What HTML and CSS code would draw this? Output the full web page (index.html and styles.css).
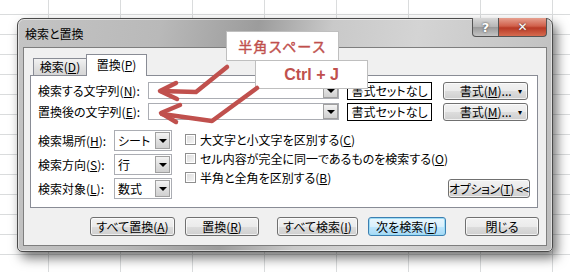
FILE: index.html
```html
<!DOCTYPE html>
<html lang="ja">
<head>
  <meta charset="UTF-8" />
  <title>検索と置換</title>
  <link rel="stylesheet" href="styles.css">
</head>
<body>
  <div class="dialog">
    <div class="titlebar">
      <span class="title">検索と置換</span>
      <div class="caption-btns">
        <span class="cbtn help">?</span>
        <span class="cbtn close">✕</span>
      </div>
    </div>

    <div class="client">
      <div class="tabs">
        <span class="tab">検索(<u>D</u>)</span>
        <span class="tab active">置換(<u>P</u>)</span>
      </div>

      <div class="panel">
        <div class="row">
          <span class="lbl">検索する文字列(<u>N</u>):</span>
          <div class="combo wide"><span class="drop"></span></div>
          <div class="fmt-preview">書式セットなし</div>
          <span class="btn fmt">書式(<u>M</u>)... <span class="caret">▾</span></span>
        </div>
        <div class="row second">
          <span class="lbl">置換後の文字列(<u>E</u>):</span>
          <div class="combo wide"><span class="drop"></span></div>
          <div class="fmt-preview">書式セットなし</div>
          <span class="btn fmt">書式(<u>M</u>)... <span class="caret">▾</span></span>
        </div>

        <div class="options">
          <div class="selects">
            <div class="srow">
              <span class="lbl2">検索場所(<u>H</u>):</span>
              <div class="combo small"><span class="val">シート</span><span class="drop"></span></div>
            </div>
            <div class="srow">
              <span class="lbl2">検索方向(<u>S</u>):</span>
              <div class="combo small"><span class="val">行</span><span class="drop"></span></div>
            </div>
            <div class="srow">
              <span class="lbl2">検索対象(<u>L</u>):</span>
              <div class="combo small"><span class="val">数式</span><span class="drop"></span></div>
            </div>
          </div>

          <div class="checks">
            <div class="check"><span class="box"></span>大文字と小文字を区別する(<u>C</u>)</div>
            <div class="check"><span class="box"></span>セル内容が完全に同一であるものを検索する(<u>O</u>)</div>
            <div class="check"><span class="box"></span>半角と全角を区別する(<u>B</u>)</div>
          </div>

          <span class="btn opt">オプション(<u>T</u>) &lt;&lt;</span>
        </div>
      </div>

      <div class="footer">
        <span class="btn b-all">すべて置換(<u>A</u>)</span>
        <span class="btn b-rep">置換(<u>R</u>)</span>
        <span class="btn b-findall">すべて検索(<u>I</u>)</span>
        <span class="btn b-next default">次を検索(<u>F</u>)</span>
        <span class="btn b-close">閉じる</span>
      </div>
    </div>
  </div>

  <div class="callout c1">半角スペース</div>
  <div class="callout c2">Ctrl + J</div>

  <svg class="arrows" width="570" height="272" viewBox="0 0 570 272">
    <g fill="none" stroke="#c0504d" stroke-width="4.5" stroke-linecap="round" stroke-linejoin="round">
      <polyline points="227,67 196,92 161,91" />
      <polyline points="176,83 160,91 177,99" />
      <polyline points="257,88 212,121 162,114" />
      <polyline points="180,105 161,113 176,122" />
    </g>
  </svg>
</body>
</html>
```

FILE: styles.css
```css
body {
  margin: 0;
  width: 570px;
  height: 272px;
  overflow: hidden;
  position: relative;
  font-family: "Noto Sans CJK JP", sans-serif;
  font-size: 12px;
  font-feature-settings: "palt";
  line-height: 1;
  white-space: nowrap;
  color: #000;
  background-color: #fff;
  background-image:
    linear-gradient(to right, #dadcdd 1px, transparent 1px),
    linear-gradient(to bottom, #dadcdd 1px, transparent 1px);
  background-size: 72px 20px;
  background-position: 48px 14px;
  padding-top: 18px;
  box-sizing: border-box;
}

u {
  text-decoration: underline;
  text-underline-offset: 1px;
}

.dialog {
  margin-left: 17px;
  width: 536px;
  height: 234px;
  box-sizing: border-box;
  border: 1px solid #4a4a4a;
  border-radius: 7px 7px 5px 5px;
  padding: 0 5px 5px 5px;
  background: linear-gradient(100deg, #c4c4c4 0%, #b9b9b9 25%, #9c9c9c 42%, #c9c9c9 55%, #d4d4d4 70%, #bdbdbd 100%);
  box-shadow: 4px 6px 12px rgba(0, 0, 0, 0.55), inset 0 0 0 1px rgba(255, 255, 255, 0.5);
}

.titlebar {
  height: 28px;
  display: flex;
  justify-content: space-between;
  align-items: flex-start;
}

.title {
  margin: 8px 0 0 2px;
  line-height: 14px;
  font-size: 12px;
}

.caption-btns {
  display: flex;
  margin-top: -1px;
}

.cbtn {
  height: 19px;
  display: flex;
  align-items: center;
  justify-content: center;
  box-sizing: border-box;
  border: 1px solid #555;
  border-top: none;
  font-family: "DejaVu Sans", sans-serif;
  font-weight: bold;
  color: #fff;
  text-shadow: 0 0 2px #333;
}

.help {
  width: 27px;
  border-radius: 0 0 0 4px;
  background: linear-gradient(#d8d8d8, #b5b5b5 50%, #9a9a9a 52%, #c4c4c4);
  font-size: 13px;
}

.close {
  width: 48px;
  border-left: none;
  border-radius: 0 0 4px 0;
  background: linear-gradient(#e6a08f, #d0604b 45%, #b83a26 55%, #d66b4f);
  font-size: 12px;
}

.client {
  height: 199px;
  box-sizing: border-box;
  border: 1px solid #7e7e7e;
  background: #f0f0f0;
  padding: 6px 0 0 6px;
}

.tabs {
  display: flex;
  align-items: flex-end;
  height: 21px;
  padding-left: 3px;
}

.tab {
  height: 17px;
  width: 53px;
  box-sizing: border-box;
  border: 1px solid #898c95;
  border-bottom: none;
  border-right: none;
  background: linear-gradient(#f2f2f2, #e2e2e2 50%, #d6d6d6);
  display: flex;
  align-items: center;
  justify-content: center;
}

.tab.active {
  height: 22px;
  width: 61px;
  border-right: 1px solid #898c95;
  background: #fff;
  padding-bottom: 2px;
  margin-bottom: -1px;
  position: relative;
  z-index: 1;
}

.panel {
  width: 508px;
  height: 133px;
  box-sizing: border-box;
  border: 1px solid #898c95;
  background: #fff;
  padding: 6px 9px 0 7px;
}

.row {
  display: flex;
  align-items: center;
  height: 17px;
}

.row.second {
  margin-top: 4px;
}

.lbl {
  width: 110px;
}

.combo {
  box-sizing: border-box;
  border: 1px solid #abadb3;
  background: #fff;
  display: flex;
  align-items: center;
  justify-content: space-between;
}

.combo.wide {
  width: 192px;
  height: 17px;
  justify-content: flex-end;
}

.drop {
  width: 15px;
  height: 15px;
  box-sizing: border-box;
  border: 1px solid #a0a0a0;
  background: linear-gradient(#f4f4f4, #e0e0e0 50%, #d0d0d0);
  position: relative;
}

.drop::after {
  content: "";
  position: absolute;
  left: 3px;
  top: 5px;
  border-left: 4px solid transparent;
  border-right: 4px solid transparent;
  border-top: 4px solid #000;
}

.fmt-preview {
  margin-left: 8px;
  width: 86px;
  height: 18px;
  box-sizing: border-box;
  border: 1px solid #000;
  background: #fff;
  display: flex;
  align-items: center;
  justify-content: center;
}

.btn {
  box-sizing: border-box;
  border: 1px solid #707070;
  border-radius: 3px;
  background: linear-gradient(#f2f2f2, #ebebeb 50%, #dddddd 51%, #cfcfcf);
  box-shadow: inset 0 0 0 1px rgba(255, 255, 255, 0.7);
  display: flex;
  align-items: center;
  justify-content: center;
}

.btn.fmt {
  margin-left: 11px;
  width: 85px;
  height: 18px;
  position: relative;
}

.caret {
  position: absolute;
  right: 5px;
  top: 4px;
  font-size: 8px;
}

.options {
  display: flex;
  margin-top: 10px;
  height: 69px;
}

.srow {
  display: flex;
  align-items: center;
  height: 21px;
  margin-bottom: 3px;
}

.lbl2 {
  width: 76px;
}

.combo.small {
  width: 58px;
  height: 21px;
  padding: 0 1px 0 3px;
}

.combo.small .drop {
  height: 17px;
  width: 15px;
}

.combo.small .drop::after {
  top: 6px;
}

.checks {
  margin-left: 13px;
}

.check {
  display: flex;
  align-items: center;
  height: 19px;
}

.box {
  width: 11px;
  height: 11px;
  box-sizing: border-box;
  border: 1px solid #8f8f8f;
  background: linear-gradient(135deg, #dcdcdc, #f6f6f6);
  box-shadow: inset 0 0 0 1px #fff;
  margin-right: 4px;
}

.btn.opt {
  margin-left: auto;
  align-self: flex-end;
  margin-bottom: 1px;
  width: 88px;
  height: 19px;
  letter-spacing: -0.4px;
}

.footer {
  display: flex;
  margin-top: 9px;
  padding-left: 60px;
}

.footer .btn {
  height: 19px;
}

.b-all { width: 85px; }
.b-rep { width: 74px; margin-left: 10px; }
.b-findall { width: 81px; margin-left: 18px; }
.b-next { width: 78px; margin-left: 10px; }
.b-close { width: 74px; margin-left: 19px; }

.btn.default {
  border-color: #3c7fb1;
  box-shadow: inset 0 0 0 1px #9ddcf5;
  background: linear-gradient(#eaf6fd, #d9f0fc 50%, #bee6fd 51%, #a7d9f5);
}

.callout {
  position: absolute;
  box-sizing: border-box;
  border: 1px solid #bfbfbf;
  background: #fff;
  color: #c0504d;
  display: flex;
  align-items: center;
  justify-content: center;
}

.c1 {
  left: 226px;
  top: 31px;
  width: 113px;
  height: 30px;
  font-size: 14px;
  font-feature-settings: normal;
  letter-spacing: 1px;
  -webkit-text-stroke: 0.4px #c0504d;
}

.c2 {
  left: 255px;
  top: 60px;
  width: 113px;
  height: 29px;
  font-family: "Liberation Sans", sans-serif;
  font-size: 16px;
  font-weight: bold;
}

.arrows {
  position: absolute;
  left: 0;
  top: 0;
}
```
